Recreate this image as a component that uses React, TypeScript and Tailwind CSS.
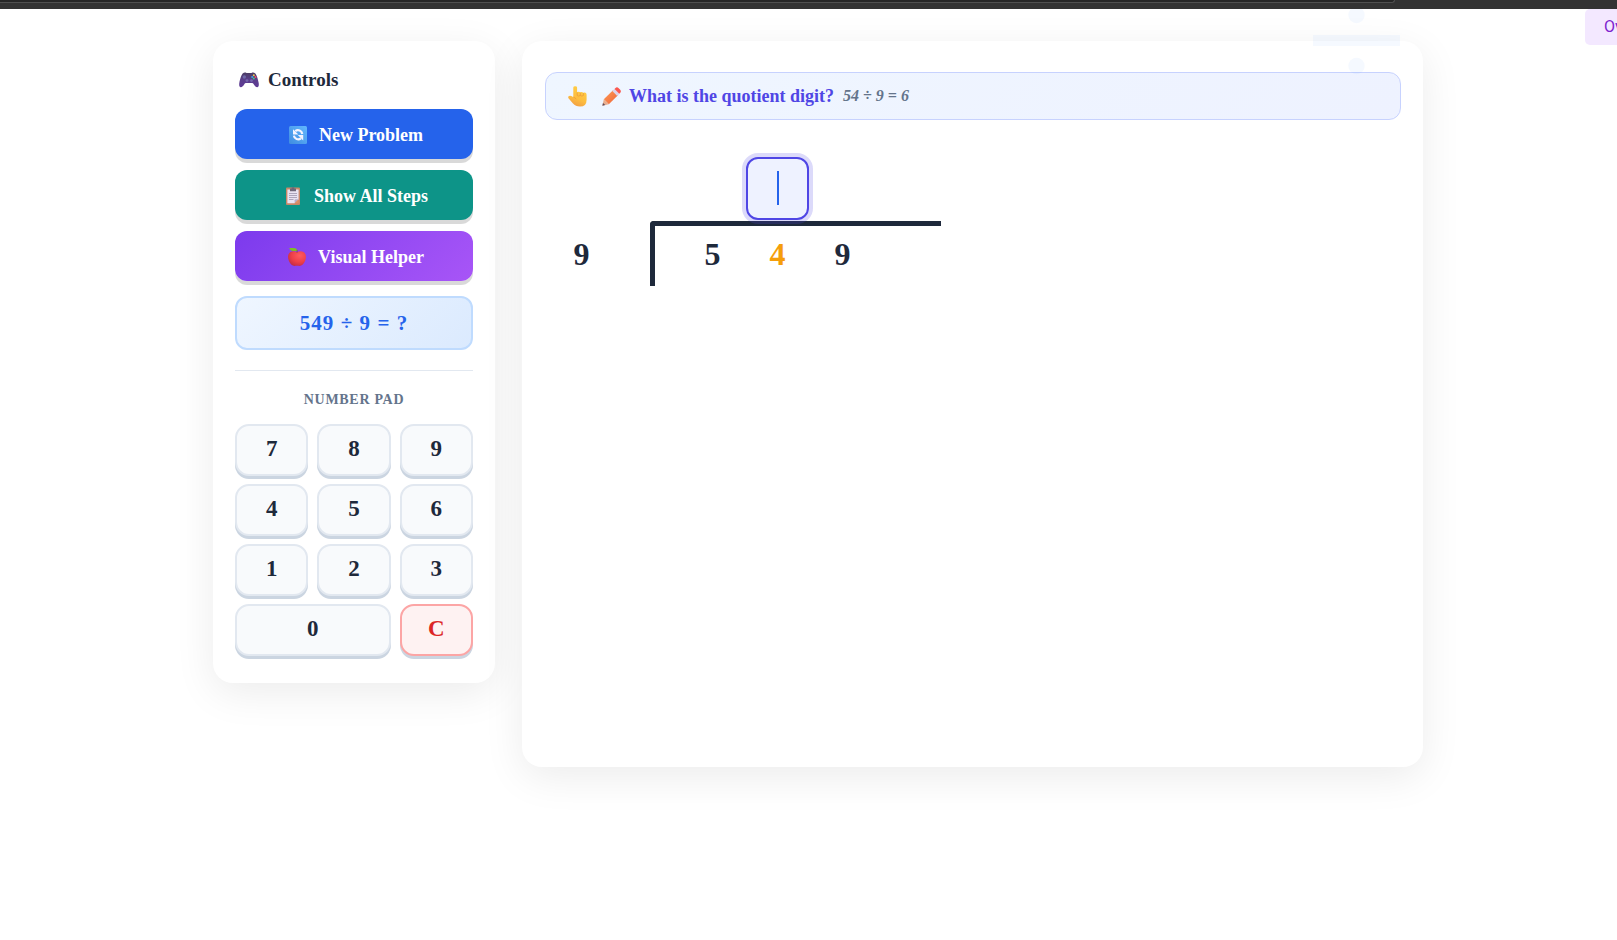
import { useState, type ReactNode } from "react";

function GamepadIcon() {
  return (
    <svg width="20" height="16" viewBox="0 0 20 16" aria-hidden="true">
      <defs>
        <linearGradient id="pad" x1="0" y1="0" x2="0" y2="1">
          <stop offset="0" stopColor="#4a3d63" />
          <stop offset="0.5" stopColor="#5b3f8c" />
          <stop offset="1" stopColor="#5f3a96" />
        </linearGradient>
      </defs>
      <path d="M4 1.200C5 .4 6.400.3 7.500 1h5C13.600.3 15 .4 16 1.200c1.500 1.300 3 5.500 3.700 9.800.4 2.600-.2 4.200-1.500 4.200-1.400 0-2.500-1.200-3.500-2.900-.4-.8-.9-1.200-1.700-1.200H7c-.8 0-1.300.4-1.700 1.200-1 1.700-2.100 2.900-3.500 2.900C.5 15.200-.1 13.600.3 11 1 6.700 2.500 2.500 4 1.200z" fill="url(#pad)" />
      <circle cx="5.300" cy="5" r="1.700" fill="#6f6aa8" />
      <circle cx="8" cy="8.600" r="1.400" fill="#7667ae" />
      <circle cx="12.500" cy="8.600" r="1.400" fill="#7667ae" />
      <circle cx="14.800" cy="3.200" r="1" fill="#f2c94c" />
      <circle cx="13.200" cy="4.900" r="1" fill="#38a9e8" />
      <circle cx="16.500" cy="4.900" r="1" fill="#f04a64" />
      <circle cx="14.800" cy="6.600" r="1" fill="#43c78b" />
    </svg>
  );
}

function RefreshIcon() {
  return (
    <svg width="18" height="18" viewBox="0 0 18 18" aria-hidden="true">
      <defs>
        <linearGradient id="tile" x1="1" y1="0" x2="0" y2="1">
          <stop offset="0" stopColor="#62b8ff" />
          <stop offset="1" stopColor="#3f8ce0" />
        </linearGradient>
      </defs>
      <rect width="18" height="18" rx="1.500" fill="url(#tile)" />
      <path d="M13.300 8A4.300 4.300 0 0 0 6.300 5.200M4.900 9.600A4.300 4.300 0 0 0 11.900 12.400" fill="none" stroke="#f4f3ff" strokeWidth="2.200" />
      <path d="M4 3.200v5.400h5.400zM14.200 14.400V9H8.800z" fill="#f4f3ff" />
    </svg>
  );
}

function ClipboardIcon() {
  return (
    <svg width="18" height="18" viewBox="-2 0 18 18" aria-hidden="true">
      <rect y="0.500" width="14" height="17.500" rx="1" fill="#c98768" />
      <path d="M1.400 2.500h11.200v9.800l-4 4H1.400z" fill="#e9e3f2" />
      <path d="M12.600 12.300l-4 4v-3q0-1 1-1z" fill="#b9adc9" />
      <path d="M8.600 16.300l4-4v4z" fill="#e08f63" />
      <path d="M4 1.500h1.500a1.500 1.500 0 0 1 3 0H10v2.700H4z" fill="#6f6678" />
      <path d="M3 6.500h8M3 8.500h8M3 10.500h8M3 12.500h4.500" stroke="#a79fb5" strokeWidth="0.900" />
    </svg>
  );
}

function AppleIcon() {
  return (
    <svg width="18" height="18" viewBox="0 0 18 18" aria-hidden="true">
      <defs>
        <radialGradient id="apple" cx="0.650" cy="0.300" r="0.750">
          <stop offset="0" stopColor="#ff5a60" />
          <stop offset="0.600" stopColor="#ee3f48" />
          <stop offset="1" stopColor="#c42c48" />
        </radialGradient>
      </defs>
      <path d="M9 4.200c2-1.200 4.600-1.500 6.500-.2C17.600 5.300 18.300 7.800 17.800 10.500c-.6 3-2.300 6-4.600 7.100-1.400.6-2.700.2-4.200.2s-2.800.4-4.200-.2C2.500 16.500.8 13.500.2 10.500-.3 7.800.4 5.300 2.500 4c1.900-1.300 4.500-1 6.500.2z" fill="url(#apple)" />
      <path d="M1.200.1h4.500Q9 .2 9.300 3H5Q2.200 3 1.200.1z" fill="#7cc024" />
      <path d="M9.200 1.800L9 5" stroke="#8b4a2b" strokeWidth="0.700" />
    </svg>
  );
}

function HandIcon() {
  return (
    <svg width="19" height="21" viewBox="0 0 19 21" aria-hidden="true">
      <defs>
        <linearGradient id="hand" x1="0.700" y1="0" x2="0.300" y2="1">
          <stop offset="0" stopColor="#ffcf45" />
          <stop offset="0.600" stopColor="#fdbd3f" />
          <stop offset="1" stopColor="#f09b45" />
        </linearGradient>
      </defs>
      <path d="M5.300 1.600Q5.300.2 7.200.2T9.100 1.600v4.500q2-1 3.200.2 1.600-.8 2.900.4 3.400-.8 3.400 2v5q0 6.900-6.600 6.900-4.500 0-7-3L.5 12.300Q-.3 10.700 1 9.900q1.500-.6 2.900.3l1.400 1z" fill="url(#hand)" />
      <path d="M9.200 6.500v3q1.500 1.200 3.100 0V6.800M12.300 9.500q1.600 1.200 3.100 0V7.100M5.300 11q1.700.6 2.900 2" fill="none" stroke="#e9973c" strokeWidth="0.700" />
    </svg>
  );
}

function PencilIcon() {
  return (
    <svg width="19" height="19" viewBox="0 0 19 19" aria-hidden="true">
      <defs>
        <linearGradient id="wood" x1="0" y1="0" x2="1" y2="1">
          <stop offset="0" stopColor="#ff9d55" />
          <stop offset="1" stopColor="#ee6238" />
        </linearGradient>
      </defs>
      <path d="M1.800 12.300L11.300 3l4.900 4.900-9.400 9.300z" fill="url(#wood)" />
      <path d="M1.800 12.300l5 4.900-6.400 1.500z" fill="#e8ad8d" />
      <path d="M1 16l2.200 2.100-2.800.6z" fill="#5c4a5c" />
      <path d="M10.300 4l2.200-2.100 4.900 4.900-2.200 2.100z" fill="#dcd3ea" />
      <path d="M12.500 1.900l1-1q1.600-1.300 3.200.3l1.300 1.300q1.600 1.600.3 3.300l-1 1z" fill="#fb584f" />
    </svg>
  );
}

function ActionButton({ icon, tone, children }: { icon: ReactNode; tone: string; children: ReactNode }) {
  return (
    <button
      type="button"
      className={`flex h-[50px] w-full items-center justify-center gap-3 rounded-xl pt-px pl-1 text-lg leading-none font-bold text-white shadow-[0_4px_0_rgba(0,0,0,0.15)] ${tone}`}
    >
      {icon}
      <span>{children}</span>
    </button>
  );
}

const keys = ["7", "8", "9", "4", "5", "6", "1", "2", "3", "0", "C"];

function keyTone(key: string) {
  if (key === "C") return "border-[#fca5a5] bg-[#fef2f2] text-[#dc2626]";
  if (key === "0") return "col-span-2 border-[#e2e8f0] bg-[#f8fafc] text-[#1e293b]";
  return "border-[#e2e8f0] bg-[#f8fafc] text-[#1e293b]";
}

export default function App() {
  const [answer, setAnswer] = useState("");

  const press = (key: string) => setAnswer(key === "C" ? "" : key);

  return (
    <div className="relative min-h-screen overflow-hidden bg-white font-['Liberation_Serif',serif]">
      <header className="h-[9px] bg-[#333333]">
        <div className="mr-[222px] h-[3px] rounded-br-lg border-r border-b border-[#505050] bg-[#262626]" />
      </header>

      <div className="pt-8 pb-10 pl-[19px]">
        <div className="mx-auto flex max-w-[1210px] items-start gap-[27px]">
          <aside className="w-[282px] shrink-0 rounded-[20px] bg-white px-[22px] pt-[25px] pb-[27px] shadow-[0_10px_40px_rgba(0,0,0,0.08)]">
            <h2 className="flex h-7 items-center gap-[9px] pl-1 text-[19px] font-bold text-[#1e293b]">
              <GamepadIcon />
              Controls
            </h2>
            <div className="mt-[15px] flex flex-col gap-[11px]">
              <ActionButton icon={<RefreshIcon />} tone="bg-[#2563eb]">New Problem</ActionButton>
              <ActionButton icon={<ClipboardIcon />} tone="bg-[#0d9488]">Show All Steps</ActionButton>
              <ActionButton icon={<AppleIcon />} tone="bg-linear-135 from-[#7c3aed] to-[#a855f7]">Visual Helper</ActionButton>
            </div>
            <div className="mt-[15px] flex h-[54px] items-center justify-center rounded-xl border-2 border-[#bfdbfe] bg-linear-135 from-[#eff6ff] to-[#dbeafe] pt-[2px] text-[21px] font-bold tracking-wider text-[#2563eb]">
              549 ÷ 9 = ?
            </div>
            <section className="mt-5 border-t border-[#e2e8f0] pt-[19px]">
              <h3 className="text-center text-sm font-bold tracking-wider text-[#64748b]">NUMBER PAD</h3>
              <div className="mt-[14px] grid grid-cols-3 gap-x-[9px] gap-y-2">
                {keys.map((key) => (
                  <button
                    key={key}
                    type="button"
                    onClick={() => press(key)}
                    className={`h-[52px] rounded-[14px] border-2 pb-[3px] text-[23px] leading-none font-bold shadow-[0_3px_0_#cbd5e1] ${keyTone(key)}`}
                  >
                    {key}
                  </button>
                ))}
              </div>
            </section>
          </aside>

          <main className="min-h-[726px] min-w-0 flex-1 rounded-[20px] bg-white pt-[31px] pr-[22px] pl-[23px] shadow-[0_10px_40px_rgba(0,0,0,0.08)]">
            <div className="relative z-10 flex h-[48px] items-center rounded-xl border border-[#c7d2fe] bg-linear-135 from-[#eff6ff] to-[#eef2ff] px-[22px]">
              <HandIcon />
              <span className="ml-[15px]">
                <PencilIcon />
              </span>
              <label htmlFor="quotient" className="ml-2 text-lg font-bold text-[#4f46e5]">
                What is the quotient digit?
              </label>
              <em className="ml-[9px] text-base font-bold text-[#64748b]">54 ÷ 9 = 6</em>
            </div>

            <div className="mt-[35px] ml-1 grid w-[392px] grid-cols-[65px_36px_291px] text-[32px] leading-none font-bold text-[#1e293b]">
              <div className="relative z-10 col-start-3 grid h-[66px] grid-cols-[30px_65px_65px_65px] items-center">
                <input
                  id="quotient"
                  value={answer}
                  onChange={(event) => setAnswer(event.target.value)}
                  maxLength={1}
                  inputMode="numeric"
                  className="col-start-3 size-[63px] place-self-center rounded-xl border-2 border-[#4f46e5] bg-[#eef2ff] bg-[linear-gradient(#2563eb,#2563eb)] bg-size-[2px_34px] bg-center bg-no-repeat text-center text-[#2563eb] caret-transparent shadow-[0_0_0_4px_rgba(79,70,229,0.2)] outline-none"
                />
              </div>
              <div className="col-start-1 flex items-center justify-center">9</div>
              <div className="col-start-3 grid h-[65px] grid-cols-[25px_65px_65px_65px] items-center rounded-tl border-t-[5px] border-l-[5px] border-[#1e293b] pb-[5px] text-center">
                <span className="col-start-2">5</span>
                <span className="text-[#f59e0b]">4</span>
                <span>9</span>
              </div>
            </div>
          </main>
        </div>
      </div>

      <svg className="pointer-events-none absolute top-[9px] right-[217px] z-20" width="87" height="66" viewBox="0 9 87 66" aria-hidden="true">
        <g fill="#3b82f6" fillOpacity="0.050">
          <circle cx="43.500" cy="15" r="8.200" />
          <rect y="35" width="87" height="11" />
          <circle cx="43.500" cy="66" r="8.200" />
        </g>
      </svg>

      <div className="absolute top-[9px] right-0 flex h-9 w-8 items-center overflow-hidden rounded-l-[5px] bg-[#f3e8ff] pl-[19px] font-[Roboto,sans-serif] text-base text-[#7e22ce]">
        Ov
      </div>
    </div>
  );
}
